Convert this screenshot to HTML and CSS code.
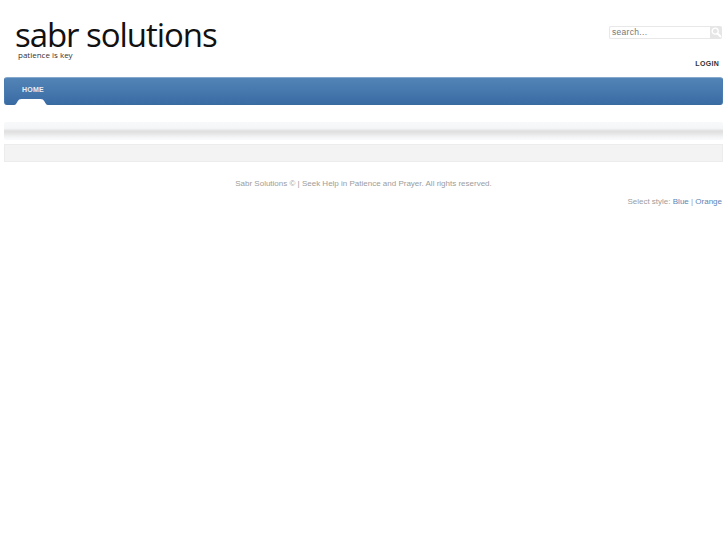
FILE: index.html
```html
<!DOCTYPE html>
<html lang="en">
<head>
<meta charset="utf-8">
<title>Sabr Solutions</title>
<link rel="stylesheet" href="styles.css">
</head>
<body>
<div class="page">
  <header class="header">
    <div class="logo">
      <div class="logo-name">sabr solutions</div>
      <div class="logo-tag">patience is key</div>
    </div>
    <div class="tools">
      <form class="search">
        <input class="search-input" type="text" value="search...">
        <span class="search-btn">
          <svg width="11" height="11" viewBox="0 0 11 11"><circle cx="4.2" cy="4.2" r="3" fill="none" stroke="#fff" stroke-width="1.3"/><path d="M6.5 6.5L10 10" stroke="#fff" stroke-width="2"/></svg>
        </span>
      </form>
      <a class="login" href="#">LOGIN</a>
    </div>
  </header>
  <nav class="nav">
    <a class="nav-item" href="#">HOME</a>
    <svg class="nav-tab" width="34" height="6" viewBox="0 0 34 6"><path d="M0 6C2 6 2.500 4 3.500 2.500C4.500 .8 5.500 0 7.500 0H26.500C28.500 0 29.500 .8 30.500 2.500C31.500 4 32 6 34 6Z" fill="#fff"/></svg>
  </nav>
  <div class="strip"></div>
  <div class="box"></div>
  <p class="copy">Sabr Solutions © | Seek Help in Patience and Prayer. All rights reserved.</p>
  <p class="style">Select style: <a href="#">Blue</a> | <a href="#">Orange</a></p>
</div>
</body>
</html>
```
FILE: styles.css
```css
html, body { margin: 0; padding: 0; background: #fff; }
body { font-family: "Liberation Sans", Arial, sans-serif; font-size: 8px; color: #aaa; }
.page { padding: 0 4px 0 4px; width: 719px; }
.header { height: 77px; display: flex; justify-content: space-between; }
.logo { padding: 18px 0 0 11px; color: #111; font-family: "Open Sans", sans-serif; }
.logo-name { font-size: 33px; line-height: 33px; letter-spacing: -1.050px; }
.logo-tag { font-size: 8px; line-height: 10px; color: #333; padding-left: 3px; margin-top: -1px; }
.tools { display: flex; flex-direction: column; align-items: flex-end; padding-top: 26px; }
.search { display: flex; height: 13px; width: 113px; margin-right: 1px; }
.search-input { box-sizing: border-box; flex: 1; min-width: 0; height: 13px; margin: 0; padding: 0 0 2px 2px; border: 1px solid #e8e8e8; border-right: 0; border-radius: 2px 0 0 2px; font: 8.500px "Liberation Sans", Arial, sans-serif; letter-spacing: .3px; color: #777; background: #fff; }
.search-btn { width: 12px; height: 13px; background: #e6e6e6; display: flex; align-items: center; justify-content: center; border-radius: 0 2px 2px 0; }
.login { margin-top: 20px; margin-right: 4px; font-size: 7px; font-weight: bold; color: #333; text-decoration: none; letter-spacing: .3px; line-height: 10px; }
.nav { position: relative; height: 28px; box-sizing: border-box; border-radius: 3px; background: linear-gradient(#5384b7, #3a6ca4); border: 1px solid #4a7bb0; border-top-color: #86a8cc; border-bottom-color: #3a6a9e; }
.nav-item { display: block; padding: 7px 0 0 17px; font-size: 7px; font-weight: bold; line-height: 10px; color: #e8eef5; text-decoration: none; letter-spacing: .2px; }
.nav-tab { position: absolute; left: 9px; bottom: -1px; }
.strip { height: 18px; margin-top: 17px; background: linear-gradient(#f7f9fb 0, #f5f6f7 35%, #dfdfdf 50%, #e3e3e3 60%, #f4f5f6 85%, #f9fafb 100%); border-radius: 2px; }
.box { box-sizing: border-box; height: 18px; margin-top: 4px; background: #f3f3f3; border: 1px solid #ececec; }
.copy { margin: 16px 0 0; text-align: center; line-height: 11px; color: #9c9c9c; }
.style { margin: 7px 1px 0 0; text-align: right; line-height: 11px; color: #9c9c9c; }
.style a { color: #5c85b5; text-decoration: none; }
```
